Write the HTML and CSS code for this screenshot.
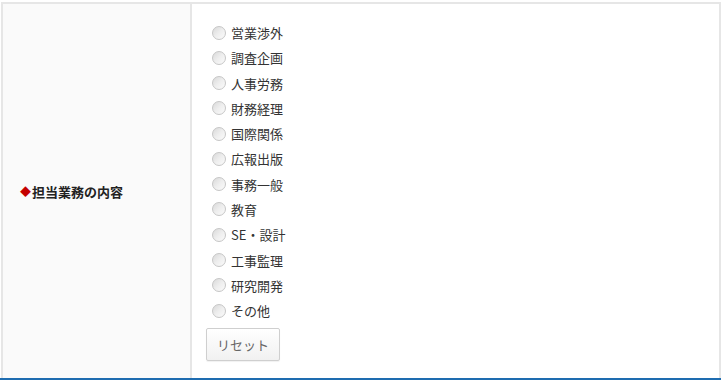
FILE: index.html
```html
<!DOCTYPE html>
<html lang="ja">
<head>
<meta charset="utf-8">
<title>担当業務の内容</title>
<link rel="stylesheet" href="styles.css">
</head>
<body>
<div class="form-table">
  <div class="row">
    <div class="label"><span class="mark">◆</span>担当業務の内容</div>
    <div class="value">
      <ul class="options">
        <li><label><input type="radio" name="job"><span>営業渉外</span></label></li>
        <li><label><input type="radio" name="job"><span>調査企画</span></label></li>
        <li><label><input type="radio" name="job"><span>人事労務</span></label></li>
        <li><label><input type="radio" name="job"><span>財務経理</span></label></li>
        <li><label><input type="radio" name="job"><span>国際関係</span></label></li>
        <li><label><input type="radio" name="job"><span>広報出版</span></label></li>
        <li><label><input type="radio" name="job"><span>事務一般</span></label></li>
        <li><label><input type="radio" name="job"><span>教育</span></label></li>
        <li><label><input type="radio" name="job"><span>SE・設計</span></label></li>
        <li><label><input type="radio" name="job"><span>工事監理</span></label></li>
        <li><label><input type="radio" name="job"><span>研究開発</span></label></li>
        <li><label><input type="radio" name="job"><span>その他</span></label></li>
      </ul>
      <button type="button" class="reset">リセット</button>
    </div>
  </div>
</div>
<div class="footer-line"></div>
</body>
</html>
```
FILE: styles.css
```css
html, body {
  margin: 0;
  padding: 0;
  background: #fff;
}
body {
  font-family: "Noto Sans CJK JP", "Noto Sans", sans-serif;
  font-size: 13px;
  color: #333;
}
.form-table {
  margin: 2px 0 0 1px;
  width: 716px;
  border-top: 2px solid #e6e6e6;
  border-left: 2px solid #e6e6e6;
  border-right: 2px solid #e6e6e6;
}
.row {
  display: flex;
  height: 374px;
}
.label {
  width: 170px;
  padding-left: 17px;
  background: #fafafa;
  border-right: 2px solid #e6e6e6;
  display: flex;
  align-items: center;
  font-weight: bold;
  color: #222;
  font-size: 13px;
}
.mark {
  color: #c40000;
  font-size: 11px;
  margin-right: 1px;
}
.value {
  flex: 1;
  padding: 16px 0 0 14px;
}
.options {
  list-style: none;
  margin: 0;
  padding: 0;
}
.options li {
  height: 25.27px;
  display: flex;
  align-items: center;
}
.options label {
  display: flex;
  align-items: center;
}
.options input {
  appearance: none;
  -webkit-appearance: none;
  width: 14px;
  height: 14px;
  margin: 0 5px 0 6px;
  border-radius: 50%;
  border: 1px solid #c6c6c6;
  background: linear-gradient(135deg, #d9d9d9 0%, #eeeeee 50%, #fbfbfb 100%);
  box-sizing: border-box;
}
.options span {
  color: #333;
  line-height: 1;
}
.reset {
  margin-top: 5px;
  width: 74px;
  height: 33px;
  border: 1px solid #cfcfcf;
  border-radius: 2px;
  background: linear-gradient(#ffffff, #f1f1f1);
  box-shadow: 0 1px 1px rgba(0,0,0,0.06);
  color: #666;
  font-family: "Noto Sans CJK JP", "Noto Sans", sans-serif;
  font-size: 13px;
  padding: 0;
}
.footer-line {
  width: 721px;
  border-top: 2px solid #1e6cb0;
}
```
